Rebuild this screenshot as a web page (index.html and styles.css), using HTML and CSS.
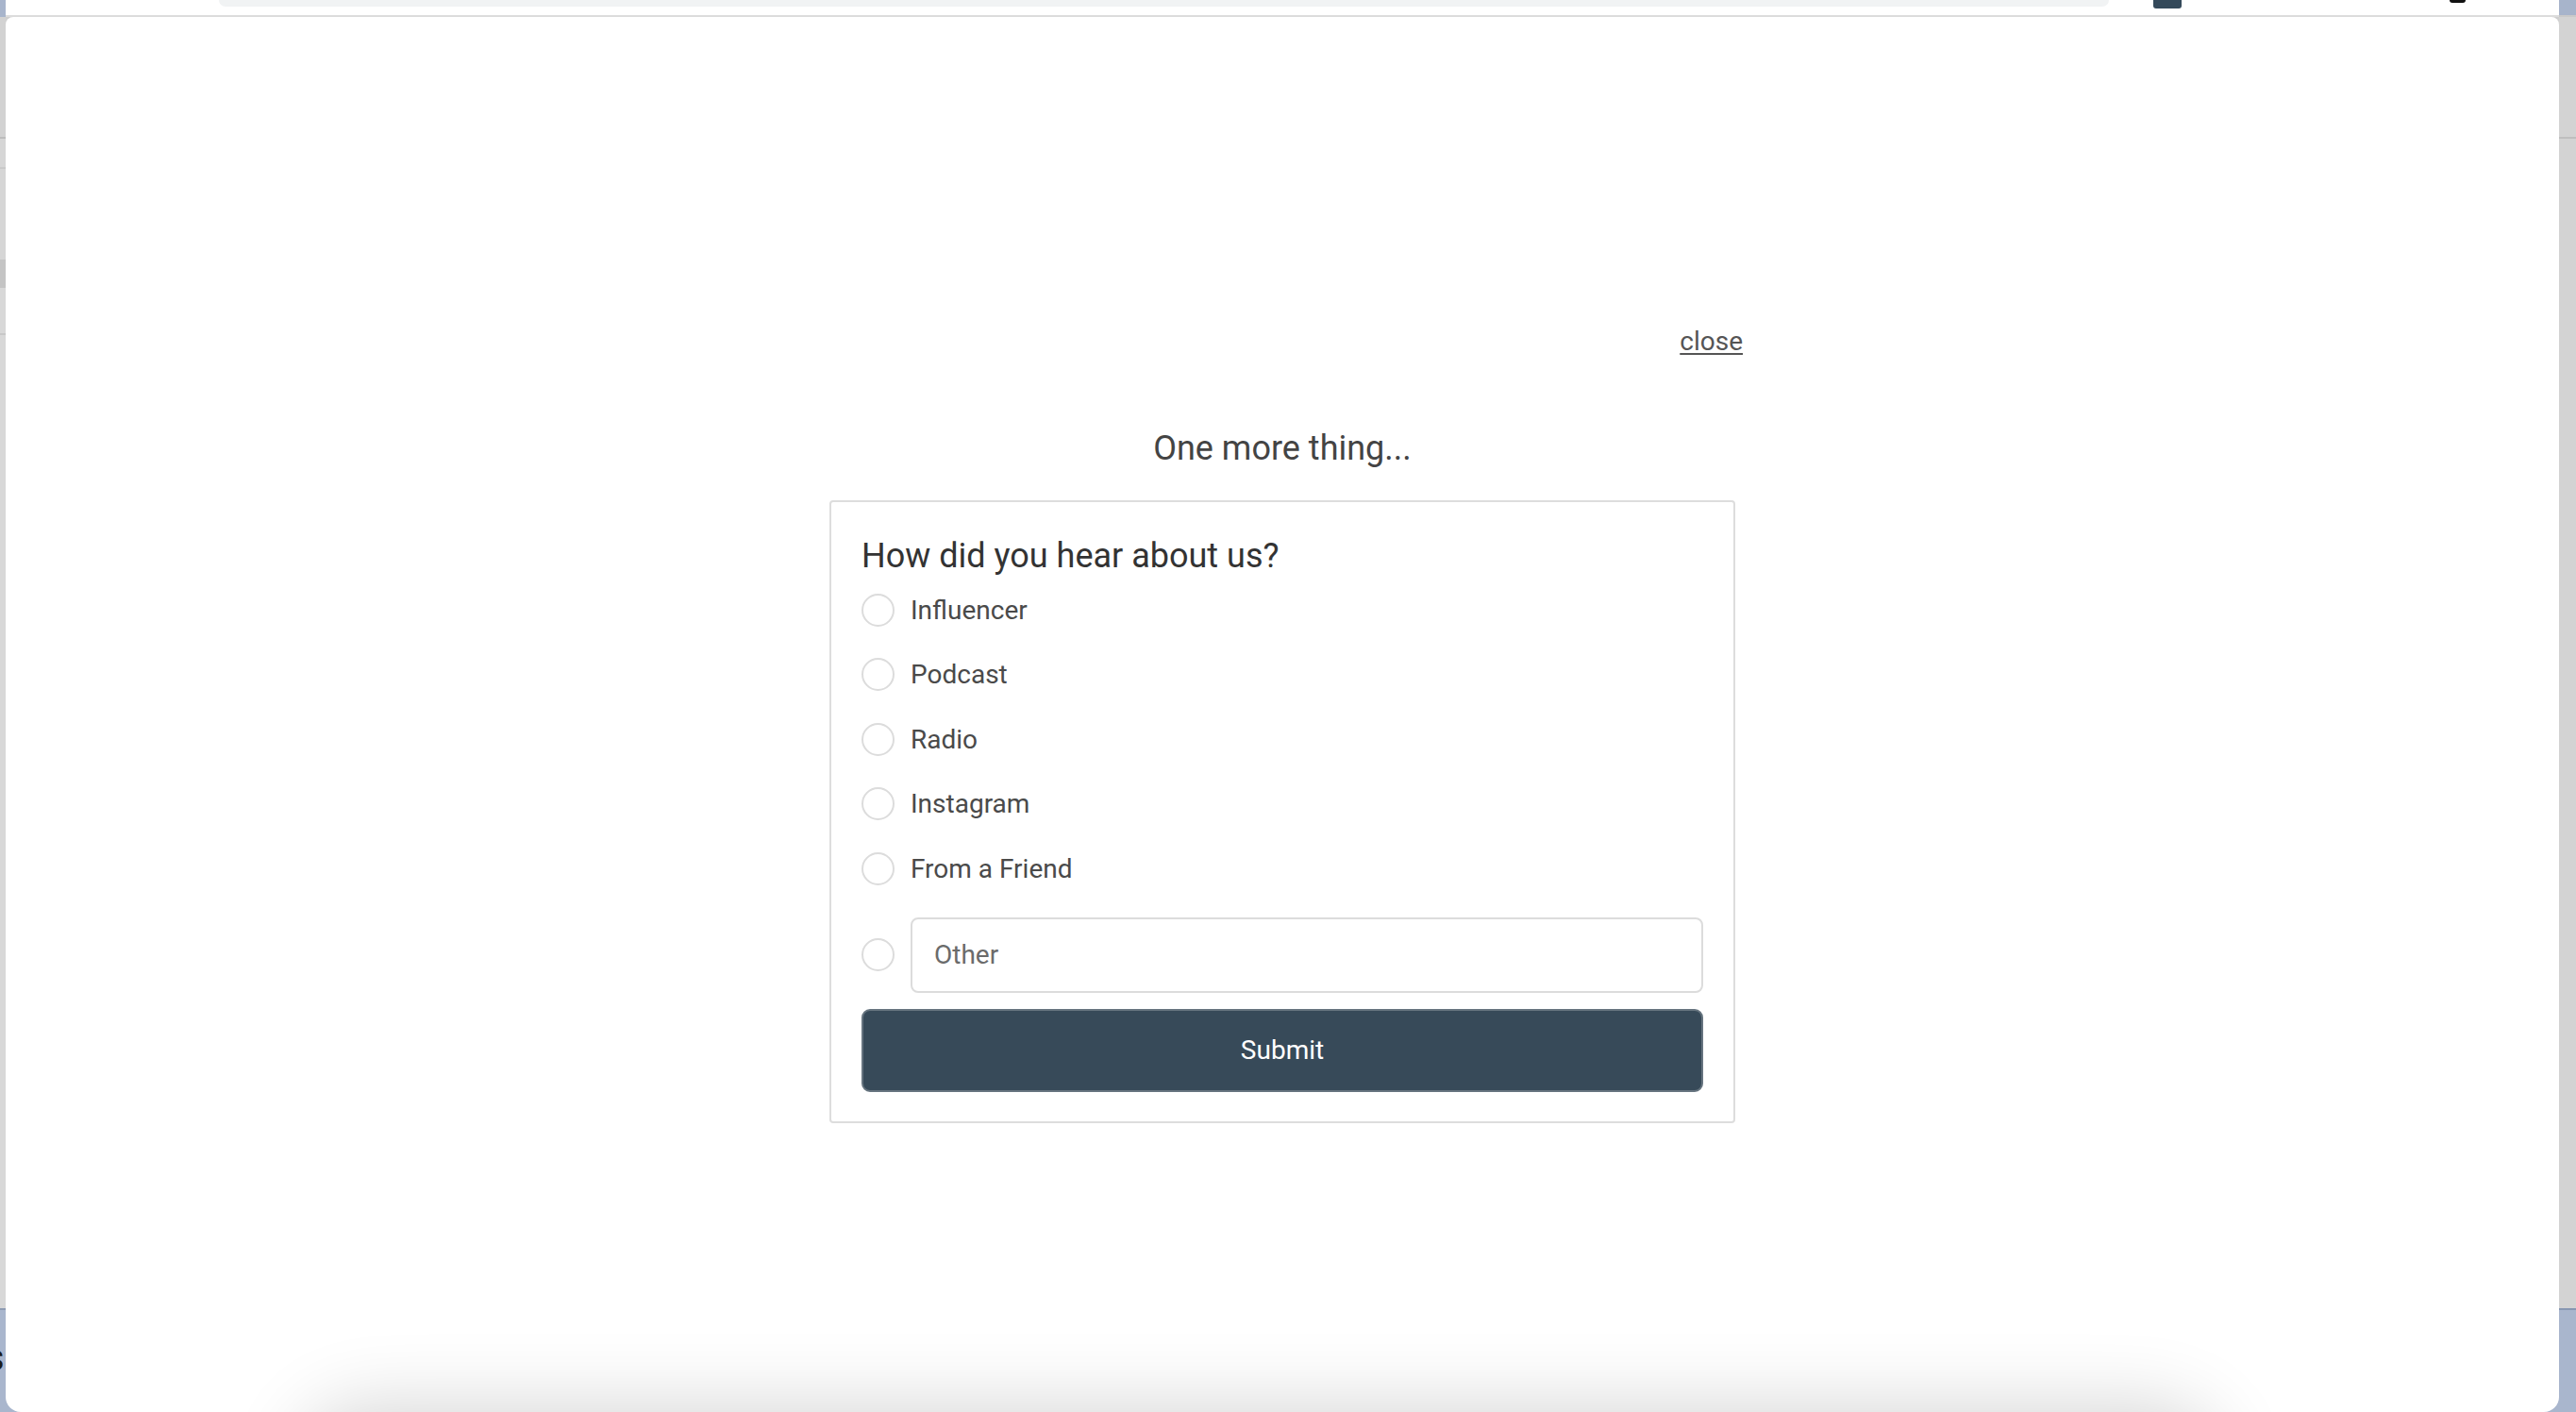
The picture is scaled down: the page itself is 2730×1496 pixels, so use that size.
FILE: index.html
```html
<!DOCTYPE html>
<html lang="en">
<head>
<meta charset="utf-8">
<title>One more thing...</title>
<link rel="stylesheet" href="styles.css">
</head>
<body>
  <div class="topbar">
    <div class="tb-left"></div>
    <div class="tb-main">
      <div class="omnibox"></div>
      <div class="badge"></div>
      <div class="dot"></div>
    </div>
    <div class="tb-right"></div>
  </div>
  <div class="stage">
    <div class="strip-left">
      <div class="strip-grey"></div>
      <div class="strip-blue"><span class="peek">s</span></div>
    </div>
    <main class="modal">
      <div class="modal-inner">
        <div class="close-row"><a class="close" href="#">close</a></div>
        <h2 class="title">One more thing...</h2>
        <form class="card">
          <h3 class="q">How did you hear about us?</h3>
          <label class="opt"><input type="radio" name="src" class="radio"><span>Influencer</span></label>
          <label class="opt"><input type="radio" name="src" class="radio"><span>Podcast</span></label>
          <label class="opt"><input type="radio" name="src" class="radio"><span>Radio</span></label>
          <label class="opt"><input type="radio" name="src" class="radio"><span>Instagram</span></label>
          <label class="opt"><input type="radio" name="src" class="radio"><span>From a Friend</span></label>
          <div class="other">
            <input type="radio" name="src" class="radio">
            <input type="text" class="other-input" placeholder="Other">
          </div>
          <button type="button" class="submit">Submit</button>
        </form>
      </div>
      <div class="under-shadow"></div>
    </main>
    <div class="scrollbar">
      <div class="sb-grey"></div>
      <div class="sb-blue"></div>
    </div>
  </div>
</body>
</html>
```
FILE: styles.css
```css
html, body {
  margin: 0;
  padding: 0;
}
body {
  width: 2730px;
  height: 1496px;
  overflow: hidden;
  background: #ffffff;
  font-family: Roboto, "Liberation Sans", Arial, sans-serif;
}

/* browser chrome remnants */
.topbar {
  display: flex;
  height: 18px;
}
.tb-left {
  width: 6px;
  background: #a8b5cc;
}
.tb-main {
  flex: 1;
  display: flex;
  align-items: flex-start;
  background: #ffffff;
  border-bottom: 2px solid #dcdcdc;
}
.omnibox {
  margin-left: 226px;
  width: 2003px;
  height: 7px;
  background: #f1f3f4;
  border-radius: 0 0 14px 14px;
}
.badge {
  margin-left: 47px;
  width: 30px;
  height: 9px;
  background: #34495a;
  border-radius: 0 0 3px 3px;
}
.dot {
  margin-left: 284px;
  width: 17px;
  height: 3px;
  background: #111111;
  border-radius: 0 0 9px 9px;
}
.tb-right {
  width: 18px;
  background: #a7b4cb;
  border-bottom: 2px solid #c9c9c9;
}

.stage {
  display: flex;
  height: 1478px;
  background: linear-gradient(to bottom, #cfcfcf 0, #cfcfcf 1368px, #a9b6cd 1368px);
}
.strip-left {
  width: 6px;
  display: flex;
  flex-direction: column;
  overflow: hidden;
  box-shadow: inset -2px 0 0 #b9b9b9;
}
.strip-grey {
  height: 1368px;
  background: linear-gradient(to bottom, #d2d2d2 0, #d2d2d2 127px, #bdbdbd 127px, #bdbdbd 129px, #d6d6d6 129px, #d6d6d6 159px, #c9c9c9 159px, #c9c9c9 161px, #d6d6d6 161px, #d6d6d6 257px, #c4c4c4 257px, #c4c4c4 287px, #d8d8d8 287px, #d8d8d8 335px, #c8c8c8 335px, #c8c8c8 337px, #d8d8d8 337px);
}
.strip-blue {
  flex: 1;
  background: #a9b6cd;
  border-top: 2px solid #8e9bb3;
}
.peek {
  display: block;
  margin-top: 36px;
  margin-left: -16px;
  font-size: 40px;
  line-height: 30px;
  color: #1c1c1c;
}

.modal {
  flex: 1;
  position: relative;
  overflow: hidden;
  background: #ffffff;
  border-radius: 8px 8px 16px 16px;
}
.modal-inner {
  width: 976px;
  margin: 0 auto;
  padding-top: 324px;
}
.close-row {
  display: flex;
  justify-content: flex-end;
  height: 40px;
  font-size: 28px;
  line-height: 40px;
}
.close {
  color: #555555;
  text-decoration: underline;
  text-decoration-thickness: 2px;
  text-underline-offset: 3px;
}
.title {
  margin: 67px 0 0;
  font-size: 36px;
  line-height: 52px;
  font-weight: 400;
  text-align: center;
  color: #444444;
}

.card {
  box-sizing: border-box;
  width: 960px;
  margin: 29px auto 0;
  padding: 34px 32px 31px;
  border: 2px solid #dddddd;
  border-radius: 4px;
}
.q {
  margin: 0;
  font-size: 36px;
  line-height: 46px;
  font-weight: 400;
  color: #333333;
}
.opt {
  display: flex;
  align-items: center;
  gap: 17px;
  height: 68.5px;
  font-size: 28px;
  color: #4a4a4a;
}
.radio {
  appearance: none;
  -webkit-appearance: none;
  box-sizing: border-box;
  flex: none;
  width: 35px;
  height: 35px;
  margin: 0;
  border: 2px solid #dcdcdc;
  border-radius: 50%;
  background: #ffffff;
}
.other {
  display: flex;
  align-items: center;
  gap: 17px;
  margin-top: 17px;
}
.other-input {
  box-sizing: border-box;
  flex: 1;
  height: 80px;
  margin: 0;
  padding: 0 23px;
  border: 2px solid #dcdcdc;
  border-radius: 8px;
  font-family: Roboto, "Liberation Sans", Arial, sans-serif;
  font-size: 28px;
  color: #444444;
  background: #ffffff;
  outline: none;
}
.other-input::placeholder {
  color: #6b6b6b;
  opacity: 1;
}
.submit {
  display: block;
  box-sizing: border-box;
  width: 100%;
  height: 88px;
  margin-top: 17px;
  background: #374a59;
  border: 2px solid #66747f;
  border-radius: 9px;
  color: #ffffff;
  font-family: Roboto, "Liberation Sans", Arial, sans-serif;
  font-size: 28px;
  font-weight: 400;
}

.under-shadow {
  position: absolute;
  top: calc(100% + 12px);
  left: 324px;
  width: 2010px;
  height: 200px;
  border-radius: 60px;
  box-shadow: 0 -6px 80px 14px rgba(0, 0, 0, 0.16);
}

.scrollbar {
  width: 18px;
  display: flex;
  flex-direction: column;
  box-shadow: inset 2px 0 0 #a9a9a9;
}
.sb-grey {
  height: 1368px;
  background: linear-gradient(to bottom, #d3d3d3 0, #d3d3d3 127px, #bebebe 127px, #bebebe 129px, #d3d3d3 129px);
}
.sb-blue {
  flex: 1;
  background: #a9b6cd;
  border-top: 2px solid #8797b2;
}
```
